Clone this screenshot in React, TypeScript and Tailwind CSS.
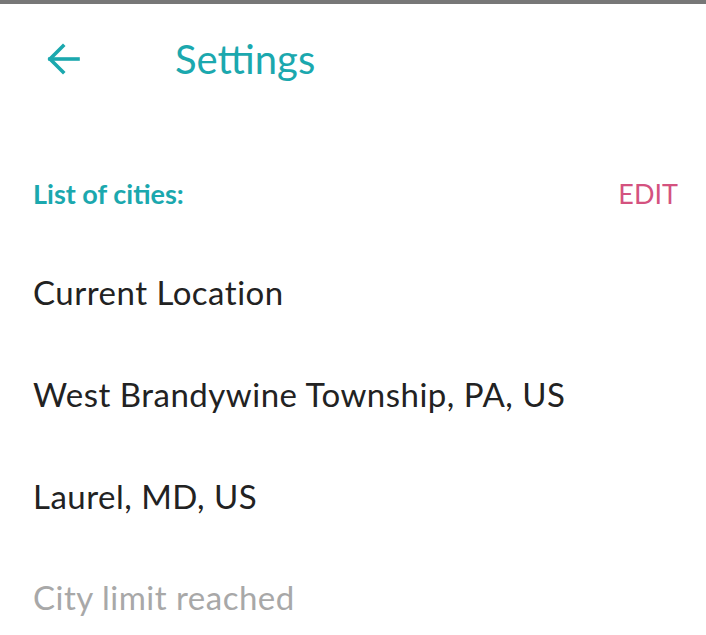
import React from "react";

export default function App() {
  const cities = ["Current Location", "West Brandywine Township, PA, US", "Laurel, MD, US"];
  return (
    <div className="w-[706px] h-[635px] bg-white overflow-hidden" style={{ fontFamily: "Lato, 'Noto Sans', sans-serif" }}>
      <div className="h-[4px] bg-[#777777]" />
      <div className="flex items-center h-[110px] pl-[46px]">
        <svg width="36" height="32" viewBox="0 0 36 32" fill="none" stroke="#1ba8ae" strokeWidth="3.6" strokeLinecap="square">
          <path d="M4 16 H32" />
          <path d="M17 3 L4 16 L17 29" />
        </svg>
        <span className="ml-[93px] text-[40px] text-[#1ba8ae] leading-none">Settings</span>
      </div>
      <div className="flex justify-between items-center px-[33px] pr-[28px] h-[54px] mt-[53px]">
        <span className="text-[27px] font-bold text-[#1ba8ae]">List of cities:</span>
        <span className="text-[27px] text-[#d4527f]">EDIT</span>
      </div>
      <div className="flex flex-col mt-[21px]">
        {cities.map((c) => (
          <div key={c} className="h-[102px] flex items-center px-[33px] text-[33px] tracking-[0.5px] text-[#222222]">{c}</div>
        ))}
        <div className="h-[100px] flex items-center px-[33px] text-[33px] tracking-[0.5px] text-[#a8a8a8]">City limit reached</div>
      </div>
    </div>
  );
}
